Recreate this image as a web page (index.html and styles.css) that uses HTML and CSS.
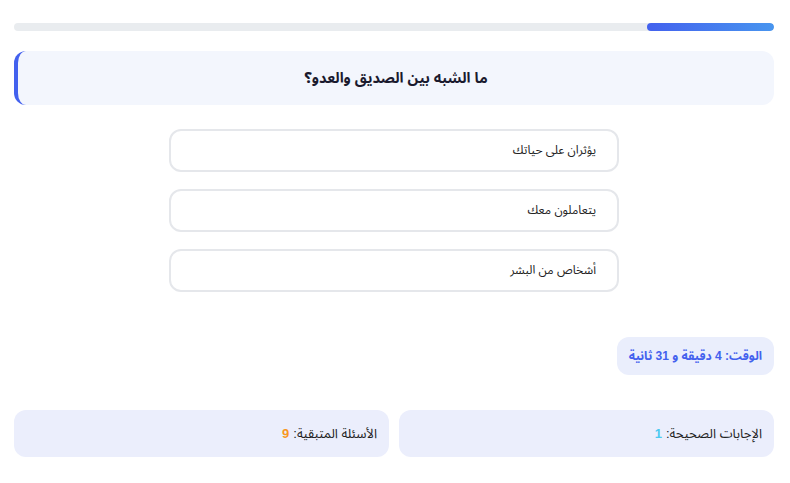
FILE: index.html
```html
<!DOCTYPE html>
<html lang="ar" dir="rtl">

<head>
    <meta charset="UTF-8">
    <meta name="viewport" content="width=device-width, initial-scale=1.0">
    <title>اختبار</title>
    <link rel="stylesheet" href="styles.css">
</head>

<body>
    <div class="quiz">
        <div class="progress">
            <div class="progress-fill" style="width: 16.7%"></div>
        </div>

        <div class="question">ما الشبه بين الصديق والعدو؟</div>

        <div class="options">
            <div class="option">يؤثران على حياتك</div>
            <div class="option">يتعاملون معك</div>
            <div class="option">أشخاص من البشر</div>
        </div>

        <div class="timer-row">
            <div class="timer">الوقت: 4 دقيقة و 31 ثانية</div>
        </div>

        <div class="stats">
            <div class="stat">الإجابات الصحيحة: <span class="num correct">1</span></div>
            <div class="stat">الأسئلة المتبقية: <span class="num left">9</span></div>
        </div>
    </div>
</body>

</html>
```

FILE: styles.css
```css
* {
    margin: 0;
    padding: 0;
    box-sizing: border-box;
}

body {
    font-family: "Liberation Sans", "Noto Sans Arabic", "DejaVu Sans", sans-serif;
    background-color: #fff;
    color: #222;
}

.quiz {
    padding: 23px 16px 0 14px;
}

.progress {
    height: 8px;
    background-color: #e9ecef;
    border-radius: 4px;
    overflow: hidden;
}

.progress-fill {
    height: 100%;
    border-radius: 4px;
    background: linear-gradient(to right, #4361ee, #4895ef);
}

.question {
    margin-top: 20px;
    height: 54px;
    display: flex;
    align-items: center;
    justify-content: center;
    background-color: #f3f6fd;
    border-left: 4px solid #4361ee;
    border-radius: 12px;
    font-size: 14.5px;
    font-weight: bold;
    color: #1a1a2e;
}

.options {
    width: 450px;
    margin: 24px auto 0;
    display: flex;
    flex-direction: column;
    gap: 17px;
}

.option {
    height: 43px;
    display: flex;
    align-items: center;
    padding: 0 21px;
    border: 2px solid #e5e7eb;
    border-radius: 12px;
    font-size: 12px;
    color: #222;
    background-color: #fff;
}

.timer-row {
    margin-top: 45px;
    display: flex;
}

.timer {
    height: 38px;
    display: flex;
    align-items: center;
    padding: 0 12px;
    background-color: #eaeefc;
    border-radius: 12px;
    font-size: 12px;
    font-weight: bold;
    color: #4361ee;
}

.timer b {
    font-size: 13px;
}

.stats {
    margin-top: 35px;
    display: grid;
    grid-template-columns: 1fr 1fr;
    gap: 10px;
}

.stat {
    height: 47px;
    display: flex;
    align-items: center;
    padding: 0 12px;
    background-color: #ebeefc;
    border-radius: 12px;
    font-size: 13px;
    color: #222;
}

.num {
    font-weight: bold;
    font-size: 13px;
    margin-right: 4px;
}

.correct {
    color: #4cc9f0;
}

.left {
    color: #f8961e;
}
```
